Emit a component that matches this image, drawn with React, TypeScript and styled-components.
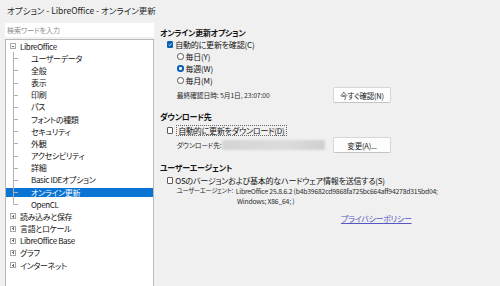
import React from "react";
import styled, { createGlobalStyle } from "styled-components";

const Global = createGlobalStyle`
  html, body { margin: 0; padding: 0; background: #f0f0f0; }
  body {
    font-family: "Noto Sans CJK JP", "Noto Sans", sans-serif;
    font-feature-settings: "palt";
    color: #141414;
    overflow: hidden;
  }
  * { box-sizing: border-box; }
`;

const Window = styled.div`
  width: 500px;
  height: 286px;
  display: flex;
  flex-direction: column;
  overflow: hidden;
  background: #f0f0f0;
`;

const TitleBar = styled.div`
  height: 19px;
  padding-left: 7px;
  display: flex;
  align-items: center;
  font-size: 8.5px;
  color: #1f1f1f;
  white-space: nowrap;
`;

const Body = styled.div`
  flex: 1;
  display: flex;
  gap: 6px;
  min-height: 0;
`;

const Sidebar = styled.div`
  width: 149px;
  margin-left: 5px;
  display: flex;
  flex-direction: column;
  gap: 1.7px;
  padding-top: 4.3px;
`;

const Search = styled.div`
  height: 14px;
  background: #fff;
  display: flex;
  align-items: center;
  padding-left: 2px;
  font-size: 7px;
  color: #8a8a8a;
`;

const Tree = styled.div`
  flex: 1;
  background: #fff;
  border: 1px solid #b9b9b9;
  border-bottom: none;
  font-size: 8px;
`;

const TreeRow = styled.div<{ $selected?: boolean }>`
  height: 12.18px;
  display: flex;
  align-items: center;
  white-space: nowrap;
  letter-spacing: -0.35px;
  color: ${(p) => (p.$selected ? "#fff" : "#141414")};
  background: ${(p) =>
    p.$selected
      ? "linear-gradient(transparent 1.6px, #0a74d4 1.6px, #0a74d4 calc(100% - 0.8px), transparent calc(100% - 0.8px))"
      : "transparent"};
`;

const Expander = styled.span`
  width: 6px;
  height: 6px;
  margin: 0 4px 0 4px;
  border: 1px solid #a8a8a8;
  position: relative;
  flex: none;
  &::before {
    content: "";
    position: absolute;
    left: 1px;
    right: 1px;
    top: 1.5px;
    height: 1px;
    background: #6a6a6a;
  }
`;

const ExpanderPlus = styled(Expander)`
  &::after {
    content: "";
    position: absolute;
    top: 0.5px;
    bottom: 0.5px;
    left: 1.5px;
    width: 1px;
    background: #6a6a6a;
  }
`;

const Guide = styled.span<{ $last?: boolean }>`
  width: 19px;
  margin-left: 6px;
  height: 100%;
  position: relative;
  flex: none;
  &::before {
    content: "";
    position: absolute;
    left: 0.5px;
    top: 0;
    width: 1px;
    height: ${(p) => (p.$last ? "50%" : "100%")};
    background: #b0b0b0;
  }
  &::after {
    content: "";
    position: absolute;
    left: 0.5px;
    top: 50%;
    width: 5px;
    height: 1px;
    background: #b0b0b0;
  }
`;

const Panel = styled.div`
  flex: 1;
  display: flex;
  flex-direction: column;
  padding-top: 7.7px;
  min-width: 0;
`;

const SectionTitle = styled.div<{ $mt?: number }>`
  height: 12px;
  margin-top: ${(p) => p.$mt ?? 0}px;
  display: flex;
  align-items: center;
  font-size: 8px;
  font-weight: 700;
  letter-spacing: -0.3px;
  white-space: nowrap;
`;

const OptionRow = styled.div<{ $indent: number; $mt?: number }>`
  height: 12px;
  margin-top: ${(p) => p.$mt ?? 0}px;
  padding-left: ${(p) => p.$indent}px;
  display: flex;
  align-items: center;
  gap: 2px;
  font-size: 8px;
  letter-spacing: -0.2px;
  white-space: nowrap;
`;

const Box = styled.span<{ $checked?: boolean }>`
  width: 6.5px;
  height: 6.5px;
  flex: none;
  border-radius: 1px;
  border: 1px solid ${(p) => (p.$checked ? "#0a5fb4" : "#5a5a5a")};
  background: ${(p) => (p.$checked ? "#0a5fb4" : "#fff")};
  display: flex;
  align-items: center;
  justify-content: center;
`;

const Radio = styled.span<{ $checked?: boolean }>`
  width: 6.5px;
  height: 6.5px;
  flex: none;
  border-radius: 50%;
  border: ${(p) => (p.$checked ? "2px solid #0a5fb4" : "1px solid #5a5a5a")};
  background: #fff;
`;

const Focus = styled.span`
  border: 1px dotted #666;
  padding: 0 1.5px 0 1px;
  height: 11px;
  line-height: 9px;
  display: flex;
  align-items: center;
  margin-left: 1px;
`;

const ActionRow = styled.div<{ $mt?: number }>`
  height: 17px;
  margin-top: ${(p) => p.$mt ?? 0}px;
  display: grid;
  grid-template-columns: 173px 58px;
  align-items: center;
`;

const Small = styled.div`
  padding-left: 16.7px;
  font-size: 6.8px;
  color: #2a2a2a;
  white-space: nowrap;
  display: flex;
  align-items: center;
  letter-spacing: -0.1px;
`;

const Field = styled.span`
  width: 107px;
  height: 10px;
  margin-left: auto;
  margin-right: 8px;
  background: linear-gradient(90deg, #d4d4d4, #dcdcdc 60%, #cfcfcf);
  filter: blur(1px);
  border-radius: 2px;
`;

const Button = styled.button`
  height: 16.6px;
  width: 58px;
  padding: 0;
  background: #fdfdfd;
  border: 1px solid #d6d6d6;
  border-bottom-color: #c4c4c4;
  border-radius: 2px;
  font-family: inherit;
  font-feature-settings: "palt";
  font-size: 7.5px;
  color: #1b1b1b;
  letter-spacing: -0.2px;
`;

const AgentRow = styled.div`
  padding-left: 16.7px;
  display: flex;
  gap: 3px;
  font-size: 6.8px;
  line-height: 10px;
  color: #2a2a2a;
  white-space: nowrap;
`;

const AgentLabel = styled.div`
  font-size: 6.4px;
  letter-spacing: -0.45px;
`;

const AgentValue = styled.div`
  letter-spacing: -0.2px;
`;

const Link = styled.a`
  margin-top: 6px;
  margin-left: 181px;
  height: 12px;
  display: flex;
  align-items: center;
  font-size: 8px;
  color: #5757c4;
  text-decoration: underline;
  letter-spacing: -0.3px;
  white-space: nowrap;
`;

type Item = { label: string; level: 0 | 1; open?: boolean; selected?: boolean; last?: boolean };

const items: Item[] = [
  { label: "LibreOffice", level: 0, open: true },
  { label: "ユーザーデータ", level: 1 },
  { label: "全般", level: 1 },
  { label: "表示", level: 1 },
  { label: "印刷", level: 1 },
  { label: "パス", level: 1 },
  { label: "フォントの種類", level: 1 },
  { label: "セキュリティ", level: 1 },
  { label: "外観", level: 1 },
  { label: "アクセシビリティ", level: 1 },
  { label: "詳細", level: 1 },
  { label: "Basic IDEオプション", level: 1 },
  { label: "オンライン更新", level: 1, selected: true },
  { label: "OpenCL", level: 1, last: true },
  { label: "読み込みと保存", level: 0 },
  { label: "言語とロケール", level: 0 },
  { label: "LibreOffice Base", level: 0 },
  { label: "グラフ", level: 0 },
  { label: "インターネット", level: 0 },
];

const Check = () => (
  <svg width="5" height="5" viewBox="0 0 10 10">
    <path d="M1.5 5.2 L4 7.6 L8.6 2.4" fill="none" stroke="#fff" strokeWidth="1.8" />
  </svg>
);

export default function App() {
  return (
    <Window>
      <Global />
      <TitleBar>オプション - LibreOffice - オンライン更新</TitleBar>
      <Body>
        <Sidebar>
          <Search>検索ワードを入力</Search>
          <Tree>
            {items.map((it) => (
              <TreeRow key={it.label} $selected={it.selected}>
                {it.level === 0 ? (it.open ? <Expander /> : <ExpanderPlus />) : <Guide $last={it.last} />}
                {it.label}
              </TreeRow>
            ))}
          </Tree>
        </Sidebar>
        <Panel>
          <SectionTitle>オンライン更新オプション</SectionTitle>
          <OptionRow $indent={6.7}>
            <Box $checked>
              <Check />
            </Box>
            自動的に更新を確認(C)
          </OptionRow>
          <OptionRow $indent={17}>
            <Radio />
            毎日(Y)
          </OptionRow>
          <OptionRow $indent={17}>
            <Radio $checked />
            毎週(W)
          </OptionRow>
          <OptionRow $indent={17}>
            <Radio />
            毎月(M)
          </OptionRow>
          <ActionRow>
            <Small>最終確認日時: 5月1日, 23:07:00</Small>
            <Button>今すぐ確認(N)</Button>
          </ActionRow>
          <SectionTitle $mt={7}>ダウンロード先</SectionTitle>
          <OptionRow $indent={6.7} $mt={2}>
            <Box />
            <Focus>自動的に更新をダウンロード(D)</Focus>
          </OptionRow>
          <ActionRow>
            <Small>
              ダウンロード先:
              <Field />
            </Small>
            <Button>変更(A)...</Button>
          </ActionRow>
          <SectionTitle $mt={7.5}>ユーザーエージェント</SectionTitle>
          <OptionRow $indent={6.7} $mt={1.2}>
            <Box />
            OSのバージョンおよび基本的なハードウェア情報を送信する(S)
          </OptionRow>
          <AgentRow>
            <AgentLabel>ユーザーエージェント:</AgentLabel>
            <AgentValue>
              LibreOffice 25.8.6.2 (b4b39682cd9868fa725bc664aff94278d315bd04;
              <br />
              &nbsp;Windows; X86_64; )
            </AgentValue>
          </AgentRow>
          <Link>プライバシーポリシー</Link>
        </Panel>
      </Body>
    </Window>
  );
}
